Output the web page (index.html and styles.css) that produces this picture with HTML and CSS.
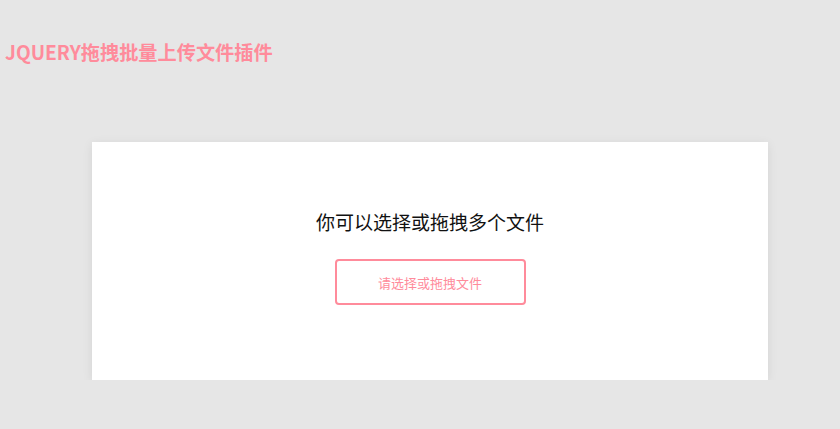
FILE: index.html
```html
<!DOCTYPE html>
<html lang="zh-CN">
<head>
    <meta charset="UTF-8">
    <meta name="viewport" content="width=device-width, initial-scale=1.0">
    <title>JQUERY拖拽批量上传文件插件</title>
    <link rel="stylesheet" href="styles.css">
</head>
<body>
    <h1 class="page-title">JQUERY拖拽批量上传文件插件</h1>

    <div class="upload-box">
        <p class="upload-tip">你可以选择或拖拽多个文件</p>
        <label class="upload-btn" for="fileInput">请选择或拖拽文件</label>
        <input type="file" id="fileInput" class="file-input" multiple>
    </div>
</body>
</html>
```

FILE: styles.css
```css
body {
    margin: 0;
    background-color: #e6e6e6;
    font-family: "Noto Sans CJK SC", "Noto Sans", sans-serif;
}
.page-title {
    margin: 0;
    padding: 38px 5px 0;
    height: 50px;
    font-size: 19.2px;
    line-height: 28px;
    font-weight: bold;
    color: #ff8b9b;
}
.upload-box {
    width: 676px;
    height: 238px;
    margin: 54px 0 0 92px;
    background-color: #fff;
    box-shadow: 0 2px 10px rgba(0, 0, 0, 0.08);
    display: flex;
    flex-direction: column;
    align-items: center;
    padding-top: 66px;
    box-sizing: border-box;
}
.upload-tip {
    margin: 0;
    font-size: 19px;
    line-height: 28px;
    color: #111;
}
.upload-btn {
    margin-top: 23px;
    width: 191px;
    height: 46px;
    box-sizing: border-box;
    border: 2px solid #ff8b9b;
    border-radius: 4px;
    display: flex;
    justify-content: center;
    align-items: center;
    font-size: 13px;
    color: #ff8b9b;
    cursor: pointer;
}
.file-input {
    display: none;
}
```
